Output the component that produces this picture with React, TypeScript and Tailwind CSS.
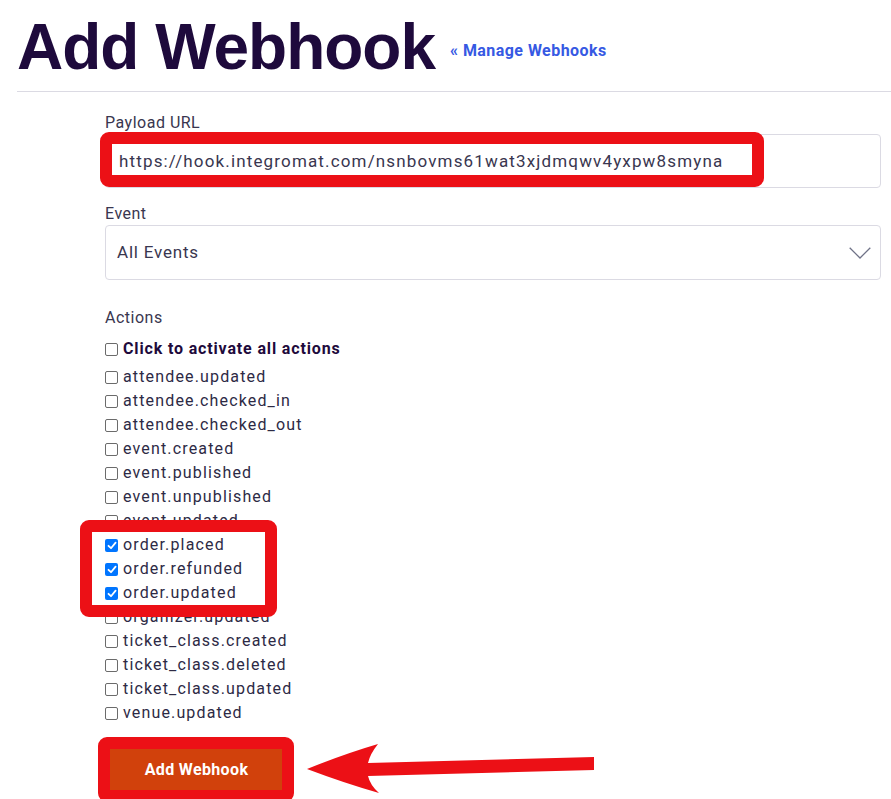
import React from "react";

const actions: { name: string; checked?: boolean }[] = [
  { name: "attendee.updated" },
  { name: "attendee.checked_in" },
  { name: "attendee.checked_out" },
  { name: "event.created" },
  { name: "event.published" },
  { name: "event.unpublished" },
  { name: "event.updated" },
  { name: "order.placed", checked: true },
  { name: "order.refunded", checked: true },
  { name: "order.updated", checked: true },
  { name: "organizer.updated" },
  { name: "ticket_class.created" },
  { name: "ticket_class.deleted" },
  { name: "ticket_class.updated" },
  { name: "venue.updated" },
];

function Box({ checked }: { checked?: boolean }) {
  if (checked) {
    return (
      <span className="flex h-[13px] w-[13px] shrink-0 items-center justify-center rounded-[2px] bg-[#0075ff]">
        <svg width="10" height="9" viewBox="0 0 10 9">
          <path d="M1.5 4.8 L4 7.2 L8.6 1.6" fill="none" stroke="#fff" strokeWidth="1.8" strokeLinecap="round" strokeLinejoin="round" />
        </svg>
      </span>
    );
  }
  return <span className="block h-[13px] w-[13px] shrink-0 rounded-[2px] border border-[#6b6b6b] bg-white" />;
}

export default function App() {
  return (
    <div
      className="relative h-[799px] w-[891px] overflow-hidden bg-white"
      style={{ fontFamily: "Roboto, 'Liberation Sans', sans-serif" }}
    >
      {/* Header */}
      <div className="flex items-start pl-[17px] pt-[15px]">
        <h1
          className="text-[64px] font-bold leading-[64px] tracking-[-1px] text-[#1e0a3c]"
          style={{ fontFamily: "'Liberation Sans', Arial, sans-serif" }}
        >
          Add Webhook
        </h1>
        <a className="ml-[15px] mt-[26px] text-[16px] font-bold leading-[20px] tracking-[0.45px] text-[#3659e3]">
          « Manage Webhooks
        </a>
      </div>
      <div className="ml-[17px] mt-[12px] h-px bg-[#dbdae3]" />

      {/* Form */}
      <div className="ml-[105px] w-[776px] text-[#39364f]">
        <div className="mt-[20px] text-[16px] leading-[22px] tracking-[0.5px]">Payload URL</div>
        <div className="flex h-[54px] items-center rounded-[4px] border border-[#dbdae3] pl-[13px] pt-[2px] text-[17px] tracking-[1.15px] text-[#39364f]">
          https://hook.integromat.com/nsnbovms61wat3xjdmqwv4yxpw8smyna
        </div>

        <div className="mt-[15px] text-[16px] leading-[22px] tracking-[0.5px]">Event</div>
        <div className="flex h-[55px] items-center justify-between rounded-[4px] border border-[#dbdae3] pl-[11px] pr-[9px] text-[17px] tracking-[0.8px]">
          <span>All Events</span>
          <svg width="22" height="12" viewBox="0 0 22 12">
            <polyline points="0.7,0.7 11,11 21.3,0.7" fill="none" stroke="#6f7287" strokeWidth="1.3" />
          </svg>
        </div>

        <div className="mt-[27px] text-[16px] leading-[22px] tracking-[0.5px]">Actions</div>
        <div className="mt-[8px] flex h-[24px] items-center gap-[5px]">
          <Box />
          <span className="text-[16px] font-bold tracking-[0.85px] text-[#1e0a3c]">Click to activate all actions</span>
        </div>
        <div className="mt-[4px] flex flex-col">
          {actions.map((a) => (
            <div key={a.name} className="flex h-[24px] items-center gap-[5px]">
              <Box checked={a.checked} />
              <span className="text-[16px] tracking-[1.15px] text-[#2d2a45]">{a.name}</span>
            </div>
          ))}
        </div>

        <button className="ml-[5px] mt-[24px] flex h-[41px] w-[173px] items-center justify-center bg-[#d1410c] text-[16px] font-bold tracking-[0.35px] text-white">
          Add Webhook
        </button>
      </div>

      {/* Annotation overlays */}
      <div className="absolute left-[100px] top-[132px] h-[55px] w-[664px] rounded-[9px] border-[12px] border-[#ec1016]" />
      <div className="absolute left-[80px] top-[520px] h-[97px] w-[197px] rounded-[9px] border-[12px] border-[#ec1016]" />
      <div className="absolute left-[98px] top-[737px] h-[65px] w-[196px] rounded-[9px] border-[12px] border-[#ec1016]" />
      <svg className="absolute left-[300px] top-[740px]" width="300" height="60" viewBox="0 0 300 60">
        <path
          d="M7 29 Q44 14 78 4 Q70 14 68 23 L294 17 L294 30 L68 36 Q70 45 79 53 Q44 43 7 29 Z"
          fill="#ec1016"
        />
      </svg>
    </div>
  );
}
